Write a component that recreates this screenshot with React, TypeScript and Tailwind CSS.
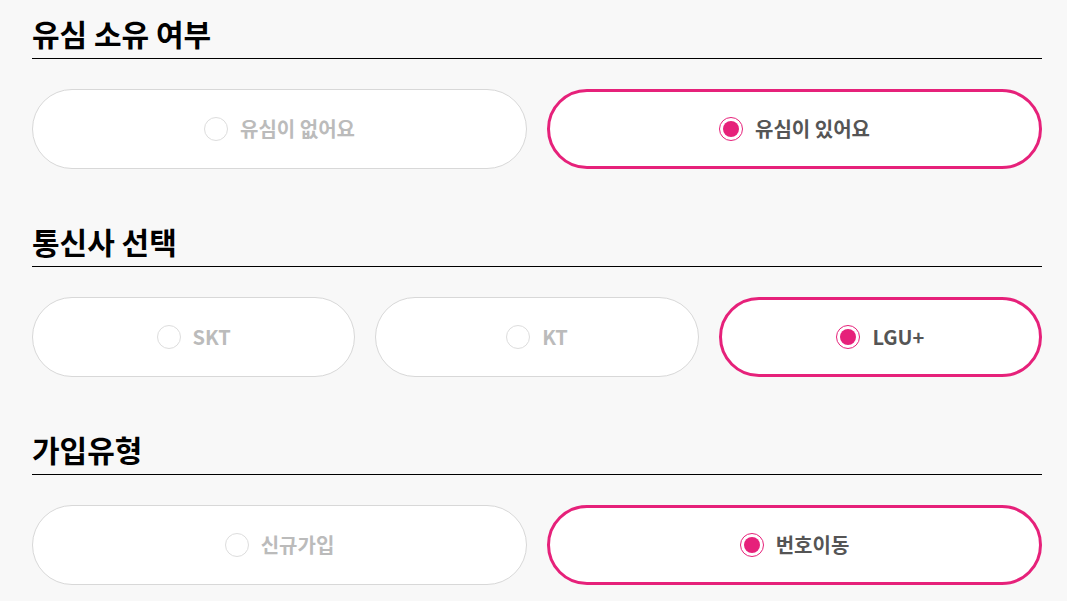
import React, { useState } from "react";

const font = { fontFamily: '"Noto Sans CJK KR", "Noto Sans", sans-serif' };

function Radio({ checked }: { checked: boolean }) {
  return checked ? (
    <span className="flex h-[24px] w-[24px] items-center justify-center rounded-full border border-[#e6217a] bg-white">
      <span className="h-[16px] w-[16px] rounded-full bg-[#e6217a]" />
    </span>
  ) : (
    <span className="h-[24px] w-[24px] rounded-full border border-[#dddddd] bg-white" />
  );
}

function Option({ label, checked, onClick }: { label: string; checked: boolean; onClick: () => void }) {
  return (
    <button
      onClick={onClick}
      className={
        checked
          ? "flex h-[80px] min-w-0 items-center justify-center gap-[12px] rounded-full border-[3px] border-[#e6217a] bg-white"
          : "flex h-[80px] min-w-0 items-center justify-center gap-[12px] rounded-full border border-[#d8d8d8] bg-white"
      }
    >
      <Radio checked={checked} />
      <span className={checked ? "text-[20px] font-bold text-[#555555]" : "text-[20px] font-bold text-[#bbbbbb]"}>
        {label}
      </span>
    </button>
  );
}

function Section({
  title,
  options,
  value,
  setValue,
  first,
}: {
  title: string;
  options: string[];
  value: string;
  setValue: (v: string) => void;
  first?: boolean;
}) {
  return (
    <section className={first ? "" : "mt-[51px]"}>
      <h2 className="border-b border-black pb-[4px] text-[30px] font-bold leading-[42px] text-black">{title}</h2>
      <div className={options.length === 3 ? "mt-[30px] grid grid-cols-3 gap-[20px]" : "mt-[30px] grid grid-cols-2 gap-[20px]"}>
        {options.map((o) => (
          <Option key={o} label={o} checked={value === o} onClick={() => setValue(o)} />
        ))}
      </div>
    </section>
  );
}

export default function App() {
  const [usim, setUsim] = useState("유심이 있어요");
  const [carrier, setCarrier] = useState("LGU+");
  const [type, setType] = useState("번호이동");
  return (
    <div className="min-h-[601px] w-full bg-[#f8f8f8] pl-[32px] pr-[25px] pt-[12px] pb-[20px]" style={font}>
      <Section first title="유심 소유 여부" options={["유심이 없어요", "유심이 있어요"]} value={usim} setValue={setUsim} />
      <Section title="통신사 선택" options={["SKT", "KT", "LGU+"]} value={carrier} setValue={setCarrier} />
      <Section title="가입유형" options={["신규가입", "번호이동"]} value={type} setValue={setType} />
    </div>
  );
}
